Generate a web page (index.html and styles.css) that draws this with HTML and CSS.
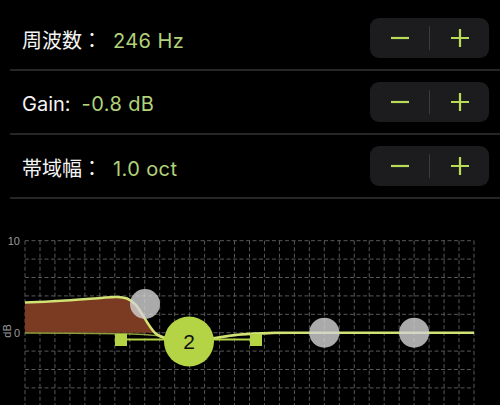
FILE: index.html
```html
<!DOCTYPE html>
<html lang="ja">
<head>
<meta charset="utf-8">
<title>EQ</title>
<link rel="stylesheet" href="styles.css">
</head>
<body>
<div class="params">
  <div class="row">
    <div class="label"><span class="name">周波数：</span><span class="value">246 Hz</span></div>
    <div class="stepper">
      <span class="half"><svg class="ico" viewBox="0 0 20 20"><path d="M1 10H19"/></svg></span>
      <span class="sep"></span>
      <span class="half"><svg class="ico" viewBox="0 0 20 20"><path d="M1 10H19M10 1V19"/></svg></span>
    </div>
  </div>
  <div class="row">
    <div class="label"><span class="name">Gain:</span><span class="value">-0.8 dB</span></div>
    <div class="stepper">
      <span class="half"><svg class="ico" viewBox="0 0 20 20"><path d="M1 10H19"/></svg></span>
      <span class="sep"></span>
      <span class="half"><svg class="ico" viewBox="0 0 20 20"><path d="M1 10H19M10 1V19"/></svg></span>
    </div>
  </div>
  <div class="row">
    <div class="label"><span class="name">帯域幅：</span><span class="value">1.0 oct</span></div>
    <div class="stepper">
      <span class="half"><svg class="ico" viewBox="0 0 20 20"><path d="M1 10H19"/></svg></span>
      <span class="sep"></span>
      <span class="half"><svg class="ico" viewBox="0 0 20 20"><path d="M1 10H19M10 1V19"/></svg></span>
    </div>
  </div>
</div>
<svg class="chart" width="500" height="206" viewBox="0 199 500 206">
  <path class="grid" d="M25,240.7V405M39.97,240.7V405M54.93,240.7V405M69.9,240.7V405M84.87,240.7V405M99.83,240.7V405M114.8,240.7V405M129.77,240.7V405M144.73,240.7V405M159.7,240.7V405M174.67,240.7V405M189.63,240.7V405M204.6,240.7V405M219.57,240.7V405M234.53,240.7V405M249.5,240.7V405M264.47,240.7V405M279.43,240.7V405M294.4,240.7V405M309.37,240.7V405M324.33,240.7V405M339.3,240.7V405M354.27,240.7V405M369.23,240.7V405M384.2,240.7V405M399.17,240.7V405M414.13,240.7V405M429.1,240.7V405M444.07,240.7V405M459.03,240.7V405M474,240.7V405"/>
  <path class="grid" d="M25,240.7H474M25,259.1H474M25,277.5H474M25,295.9H474M25,314.3H474M25,332.7H474M25,351.1H474M25,369.5H474M25,387.9H474"/>
  <text class="axis" x="20" y="244.5" text-anchor="end">10</text>
  <text class="axis" x="20" y="336.5" text-anchor="end">0</text>
  <text class="axis" x="0" y="0" text-anchor="middle" transform="translate(11,331) rotate(-90)">dB</text>
  <path class="fill" d="M25,303 C60,302.5 95,298.5 115,297.5 C125,297 130,299.5 136,305.5 C143,314 148,326 155,332.7 L25,332.7 Z"/>
  <path class="band" d="M25,332.9 C120,333 150,334 165,337 C175,340 182,341 189,341 C205,341 222,337 240,335 C258,333.5 280,333 320,332.9"/>
  <path class="curve" d="M25,302.5 C60,302 95,298 115,297 C125,296.5 130,299 136,305 C143,314 148,326 155,333 C162,339 172,341 189,341 C205,341 220,336 240,334.5 C255,333.5 262,332.9 275,332.7 L474,332.7"/>
  <rect class="handle" x="115" y="334" width="12" height="12"/>
  <rect class="handle" x="250" y="334" width="12" height="12"/>
  <path class="handle-line" d="M126,339.5H251"/>
  <circle class="dot" cx="145" cy="304" r="15"/>
  <circle class="dot" cx="324.3" cy="332.7" r="15"/>
  <circle class="dot" cx="414.1" cy="332.7" r="15"/>
  <circle class="node" cx="189" cy="341.5" r="25"/>
  <text class="node-label" x="189" y="349" text-anchor="middle">2</text>
</svg>
</body>
</html>
```
FILE: styles.css
```css
html, body {
  margin: 0;
  padding: 0;
  background: #000;
}
body {
  width: 500px;
  height: 405px;
  overflow: hidden;
  font-family: Inter, "Noto Sans CJK JP", sans-serif;
}
.params {
  padding-top: 7px;
  margin-left: 10px;
}
.row {
  height: 62px;
  border-bottom: 2px solid #262628;
  display: flex;
  align-items: center;
  justify-content: space-between;
  padding-left: 12px;
  padding-right: 11px;
}
.label {
  display: flex;
  align-items: baseline;
  font-size: 20px;
  padding-top: 3px;
}
.name {
  color: #f4f4f4;
}
.value {
  color: #b2d27a;
  margin-left: 11px;
  letter-spacing: 0.4px;
}
.stepper {
  width: 119px;
  height: 40px;
  border-radius: 9px;
  background: #1c1c1e;
  display: flex;
  align-items: center;
}
.half {
  flex: 1;
  display: flex;
  justify-content: center;
  align-items: center;
}
.sep {
  width: 1px;
  height: 24px;
  background: #3a3a3c;
}
.ico {
  width: 20px;
  height: 20px;
  fill: none;
  stroke: #b8dc58;
  stroke-width: 2.2;
}
.chart {
  display: block;
}
.grid {
  fill: none;
  stroke: #585858;
  stroke-width: 1;
  stroke-dasharray: 4 2.5;
}
.axis {
  fill: #9a9a9a;
  font-size: 11px;
  font-family: "Liberation Sans", sans-serif;
}
.fill {
  fill: #7b3a22;
}
.band {
  fill: none;
  stroke: #8d9c3c;
  stroke-width: 1.5;
}
.curve {
  fill: none;
  stroke: #d2e274;
  stroke-width: 2.6;
}
.handle {
  fill: #b5d445;
}
.handle-line {
  fill: none;
  stroke: #b5d445;
  stroke-width: 2.2;
}
.dot {
  fill: rgba(212, 212, 212, 0.8);
}
.node {
  fill: #b5d445;
}
.node-label {
  fill: #111;
  font-size: 21px;
  font-family: "Liberation Sans", sans-serif;
}
```
